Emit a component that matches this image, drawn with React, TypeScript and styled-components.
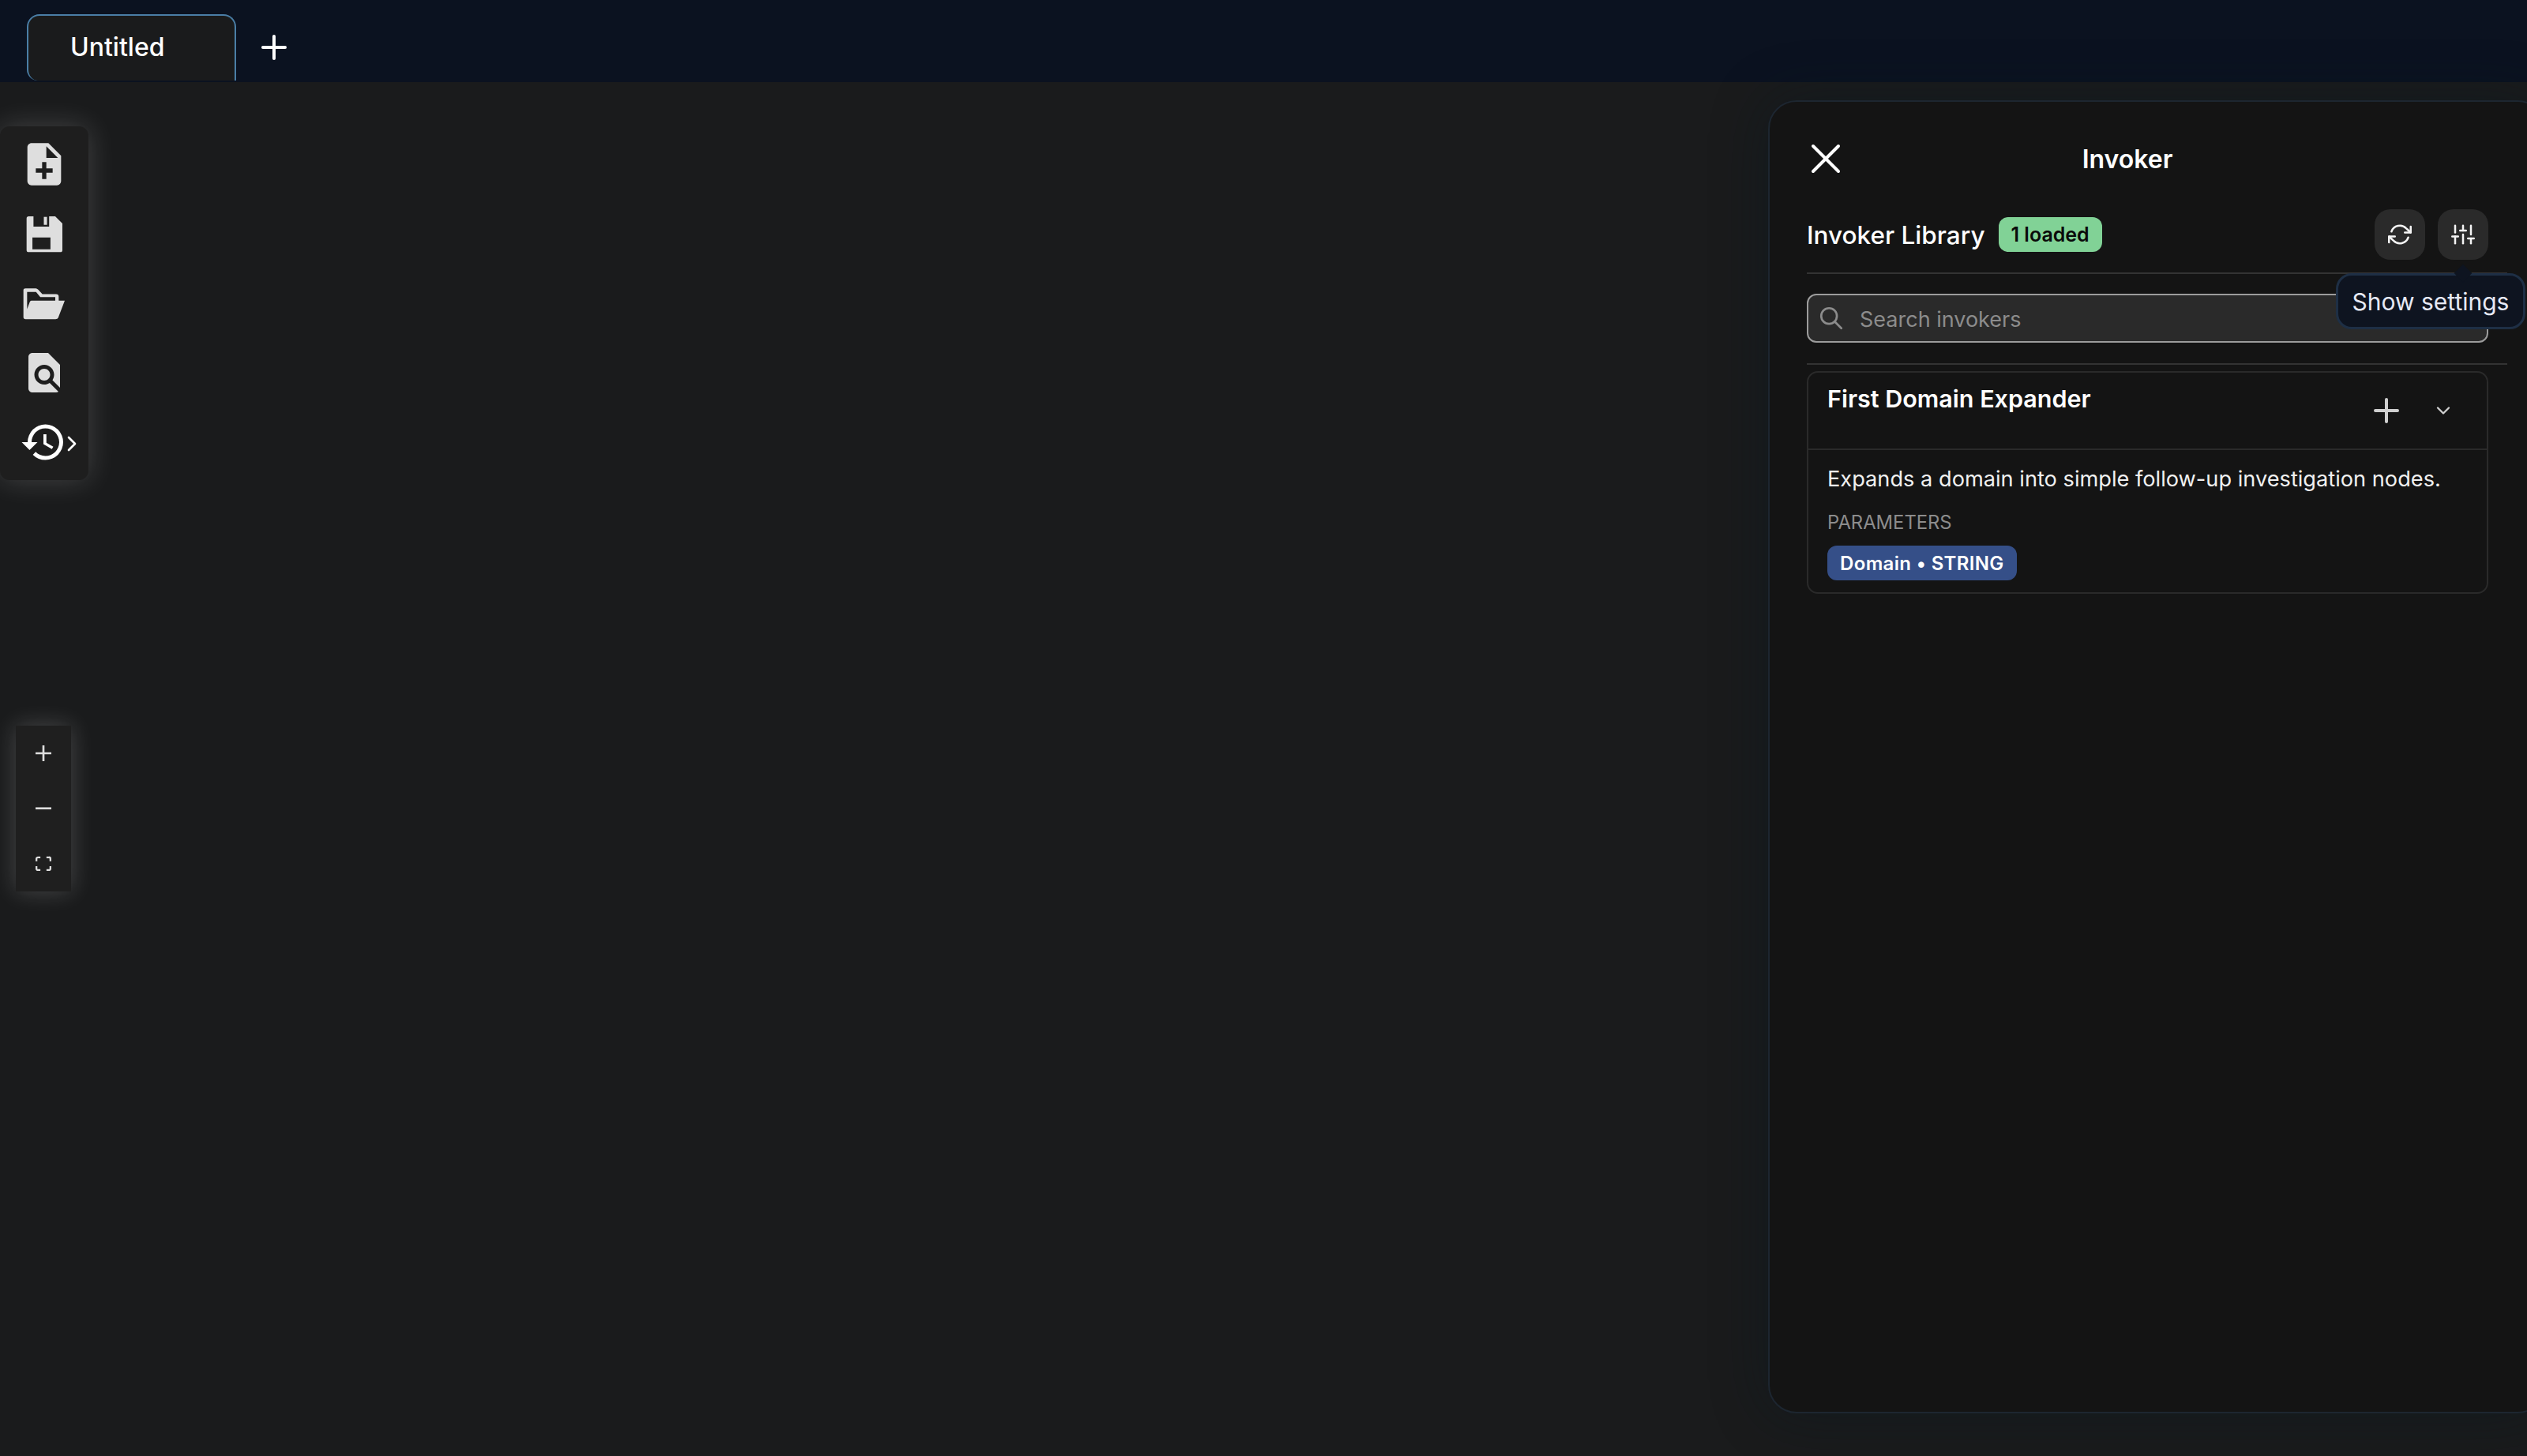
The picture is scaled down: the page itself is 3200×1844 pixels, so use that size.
import styled, { createGlobalStyle } from 'styled-components';
import { ChevronDown, ChevronRight, Plus, X } from 'lucide-react';
import { FiRefreshCw, FiSliders } from 'react-icons/fi';
import { MdFindInPage, MdHistory, MdNoteAdd } from 'react-icons/md';
import { TbSearch } from 'react-icons/tb';

const GlobalStyle = createGlobalStyle`
    html, body {
        margin: 0;
        padding: 0;
        height: 100%;
        overflow: hidden;
        background: #1a1b1c;
    }

    * {
        box-sizing: border-box;
    }

    body {
        font-family: Inter, 'Liberation Sans', sans-serif;
    }
`;

const Page = styled.div`
    width: 3200px;
    height: 1844px;
    display: flex;
    flex-direction: column;
    overflow: hidden;
`;

const TabBar = styled.div`
    height: 104px;
    flex-shrink: 0;
    display: flex;
    align-items: flex-start;
    padding: 18px 0 0 34px;
    background: #0b1220;
`;

const Tab = styled.div`
    width: 265px;
    height: 84px;
    padding: 0 0 4px 53px;
    display: flex;
    align-items: center;
    font-size: 32px;
    font-weight: 500;
    color: #fff;
    background: #1a1b1c;
    border: 2px solid #4a7ea6;
    border-bottom: none;
    border-radius: 16px 16px 0 14px;
`;

const AddTab = styled.div`
    width: 48px;
    height: 48px;
    margin: 18px 0 0 24px;
    color: #fff;
`;

const Canvas = styled.div`
    flex: 1;
    display: flex;
    justify-content: space-between;
    align-items: flex-start;
    background: #1a1b1c;
`;

const LeftColumn = styled.div`
    display: flex;
    flex-direction: column;
    align-items: flex-start;
    padding-top: 56px;
`;

const Toolbar = styled.div`
    width: 112px;
    padding: 4px 0;
    display: flex;
    flex-direction: column;
    background: #1e1e1e;
    border-radius: 12px;
    box-shadow: 0 0 36px rgba(255, 255, 255, 0.18);
`;

const ToolButton = styled.div`
    position: relative;
    height: 88px;
    display: flex;
    align-items: center;
    justify-content: center;
    color: #dedede;
`;

const HistoryButton = styled(ToolButton)`
    color: #fff;
    padding-right: 2px;
`;

const HistoryChevron = styled.div`
    position: absolute;
    left: 75px;
    top: 30px;
    width: 32px;
    height: 32px;
    color: #fff;
`;

const ZoomControls = styled.div`
    width: 70px;
    margin: 311px 0 0 20px;
    display: flex;
    flex-direction: column;
    background: #1f1f1f;
    box-shadow: 0 0 30px rgba(255, 255, 255, 0.2);
`;

const ZoomButton = styled.div`
    height: 70px;
    display: flex;
    align-items: center;
    justify-content: center;

    svg {
        width: 20px;
        height: 20px;
        fill: #dedede;
    }
`;

const Drawer = styled.aside`
    width: 985px;
    height: 1663px;
    flex-shrink: 0;
    margin: 23px -24px 0 0;
    padding: 40px 47px 0;
    background: #141414;
    border: 2px solid #1d2630;
    border-radius: 36px;
    box-shadow: 0 0 70px rgba(8, 24, 34, 0.45);
`;

const DrawerHead = styled.div`
    height: 64px;
    display: flex;
    align-items: center;
    padding-right: 131px;
`;

const CloseButton = styled.div`
    width: 64px;
    height: 64px;
    margin-left: -8px;
    color: #fff;
`;

const DrawerTitle = styled.div`
    flex: 1;
    text-align: center;
    font-size: 32px;
    font-weight: 600;
    color: #fff;
`;

const LibraryRow = styled.div`
    height: 64px;
    margin: 32px 24px 0 0;
    display: flex;
    align-items: center;
`;

const LibraryName = styled.div`
    font-size: 31.5px;
    font-weight: 500;
    color: #fff;
`;

const LoadedBadge = styled.div`
    height: 44px;
    margin-left: 17px;
    padding: 0 16px;
    display: flex;
    align-items: center;
    font-size: 25px;
    font-weight: 600;
    color: #0a0a0a;
    background: #81d296;
    border-radius: 12px;
`;

const RowActions = styled.div`
    margin-left: auto;
    display: flex;
    gap: 16px;
`;

const IconButton = styled.div`
    position: relative;
    width: 64px;
    height: 64px;
    display: flex;
    align-items: center;
    justify-content: center;
    color: #f4f4f4;
    background: #2a2a2a;
    border-radius: 20px;
`;

const Tooltip = styled.div`
    position: absolute;
    top: 81px;
    left: -129px;
    width: 240px;
    height: 71px;
    z-index: 2;
    display: flex;
    align-items: center;
    justify-content: center;
    font-size: 30px;
    white-space: nowrap;
    color: #e6e9f5;
    background: #0e1420;
    border: 3px solid #1e2f45;
    border-radius: 20px;

    &::before {
        content: '';
        position: absolute;
        top: -11px;
        left: 150px;
        width: 16px;
        height: 16px;
        background: #0e1420;
        transform: rotate(45deg);
    }
`;

const Divider = styled.div<{ $top: number }>`
    height: 2px;
    margin-top: ${(p) => p.$top}px;
    background: #333;
`;

const SearchBox = styled.div`
    height: 62px;
    margin: 25px 24px 0 0;
    padding-left: 12px;
    display: flex;
    align-items: center;
    gap: 19px;
    color: #8c8c8c;
    background: #2a2a2a;
    border: 2px solid #9c9c9c;
    border-radius: 12px;
`;

const SearchText = styled.span`
    margin-top: 2px;
    font-size: 27px;
`;

const Card = styled.div`
    margin: 8px 24px 0 0;
    background: #141414;
    border: 2px solid #2a2a2a;
    border-radius: 14px;
`;

const CardHead = styled.div`
    height: 98px;
    display: flex;
    justify-content: space-between;
    align-items: center;
    padding: 0 41px 0 24px;
    border-bottom: 2px solid #2a2a2a;
`;

const CardTitle = styled.div`
    align-self: flex-start;
    margin-top: 13px;
    line-height: 40px;
    font-size: 30.5px;
    font-weight: 600;
    color: #fff;
`;

const CardActions = styled.div`
    display: flex;
    align-items: center;
    gap: 34px;
    color: #cfcfcf;
`;

const CardBody = styled.div`
    padding: 17px 24px 15px;
`;

const Description = styled.div`
    line-height: 40px;
    font-size: 27.2px;
    color: #f0f0f0;
`;

const SectionLabel = styled.div`
    margin-top: 19px;
    line-height: 32px;
    font-size: 23.8px;
    color: #8c8c8c;
`;

const ParamBadge = styled.div`
    width: max-content;
    height: 44px;
    margin-top: 13px;
    padding: 0 16px;
    display: flex;
    align-items: center;
    font-size: 24px;
    font-weight: 600;
    letter-spacing: 0.35px;
    color: #fff;
    background: #354f88;
    border-radius: 12px;
`;

function SaveIcon() {
    return (
        <svg width="47" height="47" viewBox="38 30 140 140" fill="currentColor">
            <path
                fillRule="evenodd"
                d="M48 33H66V72H125V33H148L175 60V160Q175 168 167 168H48Q40 168 40 160V41Q40 33 48 33ZM62 113H130V157H62Z"
            />
            <path d="M105 35H117V65H105Z" />
        </svg>
    );
}

function FolderIcon() {
    return (
        <svg width="54" height="41" viewBox="26 40 162 122" fill="currentColor">
            <path
                fillRule="evenodd"
                d="M36 43H75Q80 43 84 48L100 65H152Q162 65 162 75V90H185L160 155Q158 160 150 160H36Q28 160 28 152V50Q28 43 36 43ZM42 57H76L92 76H149V90H58Q54 90 52 95L42 122Z"
            />
        </svg>
    );
}

function App() {
    return (
        <Page>
            <GlobalStyle />
            <TabBar>
                <Tab>Untitled</Tab>
                <AddTab>
                    <Plus size={48} />
                </AddTab>
            </TabBar>

            <Canvas>
                <LeftColumn>
                    <Toolbar>
                        <ToolButton>
                            <MdNoteAdd size={64} />
                        </ToolButton>
                        <ToolButton>
                            <SaveIcon />
                        </ToolButton>
                        <ToolButton>
                            <FolderIcon />
                        </ToolButton>
                        <ToolButton>
                            <MdFindInPage size={60} />
                        </ToolButton>
                        <HistoryButton>
                            <MdHistory size={60} />
                            <HistoryChevron>
                                <ChevronRight size={32} strokeWidth={2} />
                            </HistoryChevron>
                        </HistoryButton>
                    </Toolbar>

                    <ZoomControls>
                        <ZoomButton>
                            <svg viewBox="0 0 32 32">
                                <path d="M32 18.133H18.133V32h-4.266V18.133H0v-4.266h13.867V0h4.266v13.867H32z" />
                            </svg>
                        </ZoomButton>
                        <ZoomButton>
                            <svg viewBox="0 0 32 5">
                                <path d="M0 0h32v4.2H0z" />
                            </svg>
                        </ZoomButton>
                        <ZoomButton>
                            <svg viewBox="0 0 32 30">
                                <path d="M3.692 4.63c0-.53.4-.938.939-.938h5.215V0H4.708C2.13 0 0 2.054 0 4.63v5.216h3.692V4.63zM27.354 0h-5.2v3.692h5.17c.53 0 .984.4.984.939v5.215H32V4.631A4.624 4.624 0 0027.354 0zm.954 24.83c0 .532-.4.94-.939.94h-5.215v3.768h5.215c2.577 0 4.631-2.13 4.631-4.707v-5.139h-3.692v5.139zm-23.677.94c-.531 0-.939-.4-.939-.94v-5.138H0v5.139c0 2.577 2.13 4.707 4.708 4.707h5.138V25.77H4.631z" />
                            </svg>
                        </ZoomButton>
                    </ZoomControls>
                </LeftColumn>

                <Drawer>
                    <DrawerHead>
                        <CloseButton>
                            <X size={64} strokeWidth={1.5} />
                        </CloseButton>
                        <DrawerTitle>Invoker</DrawerTitle>
                    </DrawerHead>

                    <LibraryRow>
                        <LibraryName>Invoker Library</LibraryName>
                        <LoadedBadge>1 loaded</LoadedBadge>
                        <RowActions>
                            <IconButton>
                                <FiRefreshCw size={30} />
                            </IconButton>
                            <IconButton>
                                <FiSliders size={30} />
                                <Tooltip>Show settings</Tooltip>
                            </IconButton>
                        </RowActions>
                    </LibraryRow>

                    <Divider $top={16} />

                    <SearchBox>
                        <TbSearch size={34} strokeWidth={1.9} />
                        <SearchText>Search invokers</SearchText>
                    </SearchBox>

                    <Divider $top={26} />

                    <Card>
                        <CardHead>
                            <CardTitle>First Domain Expander</CardTitle>
                            <CardActions>
                                <Plus size={48} />
                                <ChevronDown size={28} />
                            </CardActions>
                        </CardHead>
                        <CardBody>
                            <Description>Expands a domain into simple follow-up investigation nodes.</Description>
                            <SectionLabel>PARAMETERS</SectionLabel>
                            <ParamBadge>Domain • STRING</ParamBadge>
                        </CardBody>
                    </Card>
                </Drawer>
            </Canvas>
        </Page>
    );
}

export default App;
